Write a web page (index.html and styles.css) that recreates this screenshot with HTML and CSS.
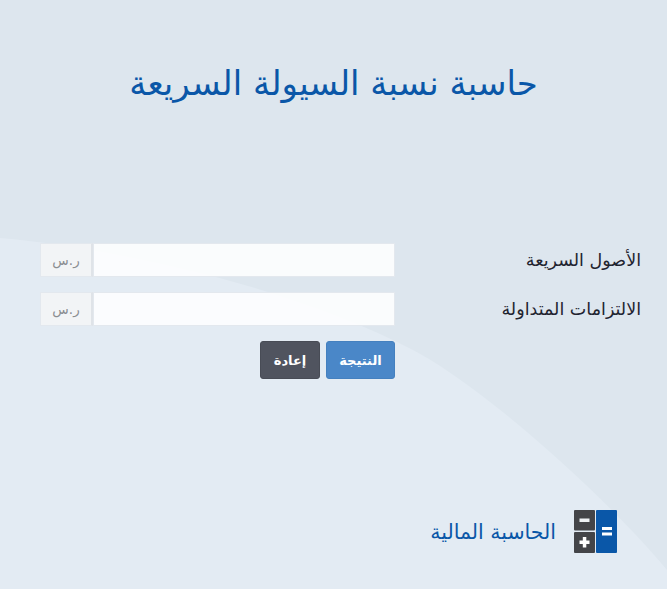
FILE: index.html
```html
<!DOCTYPE html>
<html lang="ar" dir="rtl">
<head>
  <meta charset="UTF-8">
  <meta name="viewport" content="width=device-width, initial-scale=1.0">
  <title>حاسبة نسبة السيولة السريعة</title>
  <link rel="stylesheet" href="styles.css">
</head>
<body>
  <svg class="curve" viewBox="0 0 667 589" preserveAspectRatio="none" aria-hidden="true">
    <path d="M0 238C120 248 300 290 413 350C480 385 600 490 667 570V589H0Z" fill="#e3ebf3"/>
  </svg>
  <div class="page">
    <h1 class="title">حاسبة نسبة السيولة السريعة</h1>
    <form class="calc">
      <div class="row">
        <label class="row-label">الأصول السريعة</label>
        <div class="field">
          <input class="field-input" type="text">
          <span class="addon">ر.س</span>
        </div>
      </div>
      <div class="row">
        <label class="row-label">الالتزامات المتداولة</label>
        <div class="field">
          <input class="field-input" type="text">
          <span class="addon">ر.س</span>
        </div>
      </div>
      <div class="actions">
        <button class="btn btn-primary" type="button">النتيجة</button>
        <button class="btn btn-dark" type="button">إعادة</button>
      </div>
    </form>
    <div class="brand">
      <svg class="brand-icon" width="43" height="43" viewBox="0 0 43 43" aria-hidden="true">
        <rect x="22" y="0" width="21" height="43" rx="1" fill="#0a57a8"/>
        <rect x="0" y="0" width="21" height="20.5" rx="1" fill="#434448"/>
        <rect x="0" y="22" width="21" height="21" rx="1" fill="#434448"/>
        <rect x="5.5" y="8.5" width="10" height="3.5" fill="#eef1f4"/>
        <rect x="5.5" y="30.5" width="10" height="3.5" fill="#fff"/>
        <rect x="8.8" y="27" width="3.5" height="10.5" fill="#fff"/>
        <rect x="28" y="17" width="10" height="3" fill="#fff"/>
        <rect x="28" y="22.5" width="10" height="3" fill="#fff"/>
      </svg>
      <span class="brand-name">الحاسبة المالية</span>
    </div>
  </div>
</body>
</html>
```

FILE: styles.css
```css
/* General */
body {
  margin: 0;
  height: 589px;
  overflow: hidden;
  background-color: #dde6ee;
  font-family: 'DejaVu Sans', sans-serif;
  position: relative;
}

.curve {
  position: absolute;
  top: 0;
  left: 0;
  width: 100%;
  height: 100%;
}

.page {
  position: relative;
  padding: 0 26px 0 26px;
}

.title {
  margin: 0;
  padding-top: 60px;
  height: 243px;
  box-sizing: border-box;
  text-align: center;
  color: #0a57a8;
  font-size: 34px;
  font-weight: normal;
  line-height: 46px;
}

/* Form */
.row {
  display: flex;
  justify-content: space-between;
  align-items: center;
  height: 34px;
  margin-bottom: 15px;
}

.row-label {
  color: #1f2430;
  font-size: 17.5px;
}

.field {
  display: flex;
  width: 355px;
  height: 34px;
  margin-left: 14px;
}

.field-input {
  flex: 1;
  min-width: 0;
  border: 1px solid #e3e8ee;
  background-color: rgba(255, 255, 255, 0.85);
  padding: 0 10px;
}

.addon {
  width: 53px;
  box-sizing: border-box;
  display: flex;
  align-items: center;
  justify-content: center;
  border: 1px solid #e3e8ee;
  border-right: 2px solid #dfe3e8;
  background-color: #f2f4f6;
  color: #8a8d92;
  font-size: 13.5px;
}

.actions {
  display: flex;
  gap: 6px;
  margin-right: 246px;
}

.btn {
  height: 38px;
  border: 1px solid transparent;
  border-radius: 3px;
  color: #fff;
  font-family: inherit;
  font-size: 13px;
  font-weight: bold;
  padding: 0;
}

.btn-primary {
  width: 69px;
  background-color: #4a87c8;
  border-color: #4480bf;
}

.btn-dark {
  width: 60px;
  background-color: #50545f;
  border-color: #484c56;
}

/* Footer logo */
.brand {
  display: flex;
  align-items: center;
  gap: 18px;
  margin-top: 131px;
  margin-right: 24px;
}

.brand-name {
  color: #0a57a8;
  font-size: 20.5px;
}
```
